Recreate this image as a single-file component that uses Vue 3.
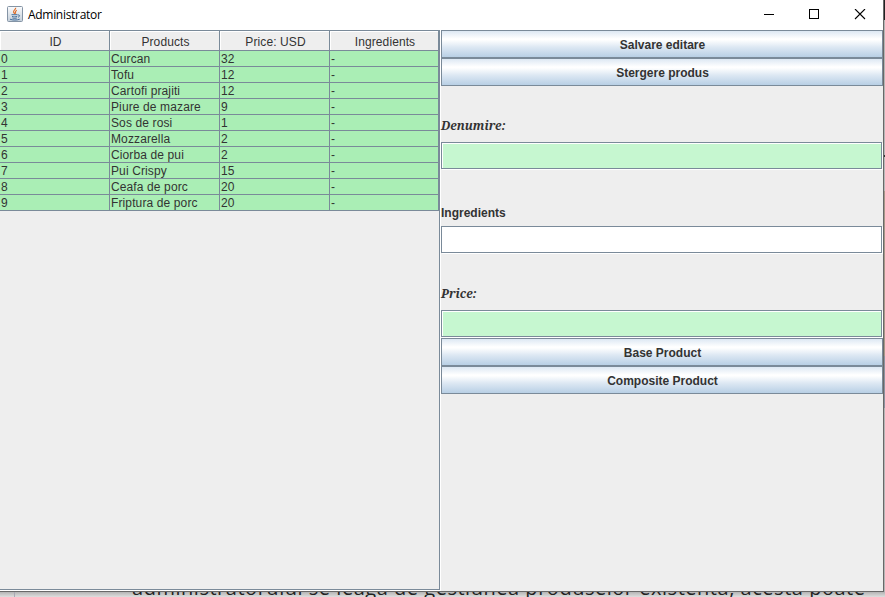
<script setup>
const columns = ['ID', 'Products', 'Price: USD', 'Ingredients']
const products = [
  [0, 'Curcan', 32],
  [1, 'Tofu', 12],
  [2, 'Cartofi prajiti', 12],
  [3, 'Piure de mazare', 9],
  [4, 'Sos de rosi', 1],
  [5, 'Mozzarella', 2],
  [6, 'Ciorba de pui', 2],
  [7, 'Pui Crispy', 15],
  [8, 'Ceafa de porc', 20],
  [9, 'Friptura de porc', 20],
]
</script>

<template>
  <div class="desktop">
    <div class="window">
      <header class="titlebar">
        <svg class="java" width="16" height="16" viewBox="0 0 16 16">
          <defs>
            <linearGradient id="jbg" x1="0" y1="0" x2="0" y2="1">
              <stop offset="0" stop-color="#fbfcfd" />
              <stop offset="1" stop-color="#c3ced9" />
            </linearGradient>
          </defs>
          <rect x="0.5" y="0.5" width="15" height="15" rx="1" fill="url(#jbg)" stroke="#8494a5" />
          <path d="M8.6 1.8C9.3 3.5 6 4.3 6.6 6c.2.7 1 1.1 1 1.9M9.8 4.2C7.5 5.3 8.7 6.1 8.5 7.6" fill="none" stroke="#e0702c" stroke-width="1.2" />
          <path d="M4.5 8.7h6M5 10.4c1.6.6 3.7.6 5.2 0M5.4 12c1.4.5 3 .5 4.4 0M3 13.2c2.5 1.1 7.2 1.1 9.7 0M10.8 9c2.5-.5 2.3 1.7.2 2.2" fill="none" stroke="#456f9b" stroke-width="1" />
        </svg>
        <span class="title">Administrator</span>
        <svg class="controls" width="106" height="12" viewBox="0 0 106 12" shape-rendering="crispEdges">
          <path d="M1 5.5h10" stroke="#000" />
          <rect x="46.5" y="0.5" width="9" height="9" fill="none" stroke="#000" />
          <path d="M92 0l10 10M102 0L92 10" stroke="#000" stroke-width="1.1" shape-rendering="auto" />
        </svg>
      </header>
      <main class="content">
        <section class="scroll">
          <div class="row head">
            <div v-for="c in columns" :key="c" class="hcell"><span>{{ c }}</span></div>
          </div>
          <div v-for="p in products" :key="p[0]" class="row">
            <div v-for="(v, i) in [...p, '-']" :key="i" class="cell">{{ v }}</div>
          </div>
        </section>
        <section class="form">
          <button class="btn">Salvare editare</button>
          <button class="btn">Stergere produs</button>
          <div class="blank"></div>
          <label class="label fancy">Denumire:</label>
          <div class="field green"></div>
          <div class="blank"></div>
          <label class="label">Ingredients</label>
          <div class="field"></div>
          <div class="blank"></div>
          <label class="label fancy">Price:</label>
          <div class="field green"></div>
          <button class="btn">Base Product</button>
          <button class="btn">Composite Product</button>
        </section>
      </main>
    </div>
    <div class="side">
      <i class="s1"></i><i class="s2"></i><i class="s3"></i><i class="s4"></i><i class="s5"></i><i class="s6"></i><i class="s7"></i>
    </div>
    <div class="behind">
      <svg width="885" height="5" viewBox="0 592 885 5">
        <path d="M14.5 592v5" stroke="#a9a9b4" />
        <text x="132" y="594.5" textLength="733" font-size="20" fill="#222">administratorului se leaga de gestiunea produselor existenta, acesta poate</text>
      </svg>
    </div>
  </div>
</template>

<style>
body { overflow: hidden; }
</style>

<style scoped>
* { box-sizing: border-box; }
.desktop {
  width: 885px;
  height: 597px;
  display: grid;
  grid-template-columns: 884px 1px;
  grid-template-rows: 592px 5px;
  overflow: hidden;
  font-family: "Liberation Sans", Arial, sans-serif;
  font-size: 12px;
  color: #333;
}
.window {
  display: flex;
  flex-direction: column;
  background: #eee;
  border-right: 1px solid #686868;
  border-bottom: 1px solid #686868;
}
.titlebar {
  height: 30px;
  flex: none;
  display: flex;
  align-items: center;
  padding: 0 9px 2px 7px;
  background: #fff;
}
.java { flex: none; }
.title {
  margin: 0 0 0 5px;
  flex: 1;
  font-family: "Open Sans", sans-serif;
  font-size: 12px;
  letter-spacing: -0.3px;
  color: #000;
}
.controls { margin-right: 5px; margin-top: 2px; }
.content { flex: 1; display: flex; min-height: 0; }
.scroll {
  width: 441px;
  height: 561px;
  flex: none;
  border-right: 1px solid #fff;
  border-bottom: 1px solid #fff;
  box-shadow: inset -1px -1px #7a8a99, inset 0 1px #7a8a99;
  padding: 1px 2px 0 0;
}
.row {
  display: grid;
  grid-template-columns: 110px 110px 110px 109px;
  grid-template-rows: 16px;
  height: 16px;
}
.row.head { height: 20px; grid-template-rows: 20px; }
.hcell {
  display: flex;
  align-items: center;
  justify-content: center;
  border-right: 1px solid #7a8a99;
  border-bottom: 1px solid #7a8a99;
  box-shadow: inset 1px 1px #fff;
  padding: 2px 0 0 2px;
  letter-spacing: 0.1px;
}
.cell {
  height: 16px;
  background: #aaeeb5;
  border-right: 1px solid #7a8a99;
  border-bottom: 1px solid #7a8a99;
  padding-left: 1px;
  line-height: 16px;
  letter-spacing: 0.12px;
  white-space: nowrap;
}
.form {
  width: 442px;
  display: grid;
  grid-auto-rows: 28px;
  align-content: start;
}
.btn {
  margin: 0;
  padding: 1px 0 0 1px;
  border: 1px solid #7a8a99;
  border-radius: 0;
  background: linear-gradient(#dde8f3 0%, #fff 30%, #fff 34%, #dde8f3 62%, #b8cfe5 100%);
  font: bold 12px "Liberation Sans", Arial, sans-serif;
  color: #333;
}
.label {
  display: flex;
  align-items: center;
  padding-top: 1px;
  font-weight: bold;
}
.label.fancy {
  padding: 0 0 6px;
  font-family: "Noto Serif", "DejaVu Serif", "Liberation Serif", serif;
  font-style: italic;
  font-size: 12px;
}
.field {
  background: #fff;
  border: 1px solid #7a8a99;
  margin: 0 1px 1px 0;
  box-shadow: inset 1px 1px #fff, 1px 1px #fff;
}
.green { background: #c6f7d0; }
.side { display: flex; flex-direction: column; background: #aaa; }
.side i { display: block; }
.s1 { height: 20px; background: #222; }
.s2 { height: 135px; background: #b5b5b5; }
.s3 { height: 2px; background: #333; }
.s4 { height: 34px; background: #b8b8b8; }
.s5 { height: 165px; background: #a79889; }
.s6 { height: 52px; background: #8d93a0; }
.s7 { height: 184px; background: #b5b5b5; }
.behind {
  grid-column: 1 / 3;
  background: linear-gradient(#b4b4b4, #dedede);
}
.behind svg { display: block; font-family: "Open Sans", sans-serif; }
</style>
